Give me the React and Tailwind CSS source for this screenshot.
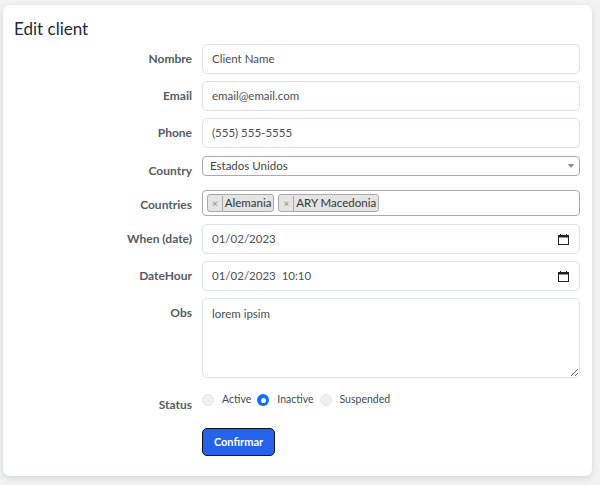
const font = { fontFamily: 'Lato, "Noto Sans", sans-serif' };

const Label = ({ children }) => (
  <label className="w-[178px] shrink-0 pt-[7px] text-right text-[12px] leading-[16px] font-bold text-[#555b63]">
    {children}
  </label>
);

const Row = ({ label, className = "", children }) => (
  <div className={"flex items-start gap-[10px] " + className}>
    <Label>{label}</Label>
    <div className="flex-1">{children}</div>
  </div>
);

const TextBox = ({ value, icon = false }) => (
  <div className="flex h-[30px] items-center justify-between rounded-[5px] border border-[#dee2e6] bg-white px-[9px] text-[11.5px] text-[#4a4f55]">
    <span>{value}</span>
    {icon && <Calendar />}
  </div>
);

const Calendar = () => (
  <svg width="11" height="11" viewBox="0 0 11 11" className="mr-[1px]">
    <rect x="0.5" y="1.5" width="10" height="9" fill="none" stroke="#222" strokeWidth="1" />
    <rect x="0.5" y="1.5" width="10" height="2" fill="#222" />
    <rect x="2" y="0" width="1" height="2" fill="#222" />
    <rect x="8" y="0" width="1" height="2" fill="#222" />
  </svg>
);

const Tag = ({ children }) => (
  <span className="flex h-[18px] items-center rounded-[3px] border border-[#aaa] bg-[#e4e4e4] text-[11.5px] text-[#333]">
    <span className="border-r border-[#aaa] px-[4px] text-[10px] text-[#888]">×</span>
    <span className="px-[2px]">{children}</span>
  </span>
);

const Radio = ({ checked, label }) => (
  <span className="flex items-center gap-[8px]">
    {checked ? (
      <span className="flex h-[12px] w-[12px] items-center justify-center rounded-full bg-[#0d6efd]">
        <span className="h-[5px] w-[5px] rounded-full bg-white" />
      </span>
    ) : (
      <span className="h-[12px] w-[12px] rounded-full border border-[#e3e5e8] bg-[#eef0f2]" />
    )}
    <span className="text-[10.5px] text-[#444a50]">{label}</span>
  </span>
);

export default function App() {
  return (
    <div style={font} className="h-[485px] w-[600px] bg-[#f1f2f4] pl-[3px] pr-[8px] pt-[5px]">
      <div className="h-[471px] rounded-[7px] bg-white pl-[11px] pr-[12px] pt-[14px] shadow-[0_2px_6px_rgba(0,0,0,0.12)]">
        <h2 className="text-[17px] leading-[20px] text-[#1d2a3a]">Edit client</h2>
        <div className="mt-[5px]">
          <Row label="Nombre" className="mb-[7px]">
            <TextBox value="Client Name" />
          </Row>
          <Row label="Email" className="mb-[7px]">
            <TextBox value="email@email.com" />
          </Row>
          <Row label="Phone" className="mb-[8px]">
            <TextBox value="(555) 555-5555" />
          </Row>
          <Row label="Country" className="mb-[11px]">
            <div className="flex h-[20px] items-center justify-between rounded-[4px] border border-[#aaa] bg-white pl-[7px] pr-[5px] text-[11.5px] text-[#444]">
              <span>Estados Unidos</span>
              <span className="h-0 w-0 border-x-[3px] border-t-[4px] border-x-transparent border-t-[#888]" />
            </div>
          </Row>
          <Row label="Countries" className="mb-[8px]">
            <div className="flex h-[26px] items-center gap-[4px] rounded-[4px] border border-[#aaa] bg-white px-[4px]">
              <Tag>Alemania</Tag>
              <Tag>ARY Macedonia</Tag>
            </div>
          </Row>
          <Row label="When (date)" className="mb-[7px]">
            <TextBox value="01/02/2023" icon />
          </Row>
          <Row label="DateHour" className="mb-[7px]">
            <TextBox value={"01/02/2023\u00a0\u00a010:10"} icon />
          </Row>
          <Row label="Obs" className="mb-[12px]">
            <textarea
              readOnly
              value="lorem ipsim"
              className="block h-[80px] w-full rounded-[5px] border border-[#dee2e6] bg-white px-[9px] py-[6px] text-[11.5px] text-[#4a4f55] outline-none"
            />
          </Row>
          <Row label="Status" className="mb-[15px]">
            <div className="flex h-[20px] items-center gap-[6px]">
              <Radio label="Active" />
              <Radio checked label="Inactive" />
              <Radio label="Suspended" />
            </div>
          </Row>
          <div className="pl-[188px]">
            <button className="h-[28px] w-[73px] rounded-[5px] border border-[#111] bg-[#2563eb] text-[11px] font-bold text-white">
              Confirmar
            </button>
          </div>
        </div>
      </div>
    </div>
  );
}
